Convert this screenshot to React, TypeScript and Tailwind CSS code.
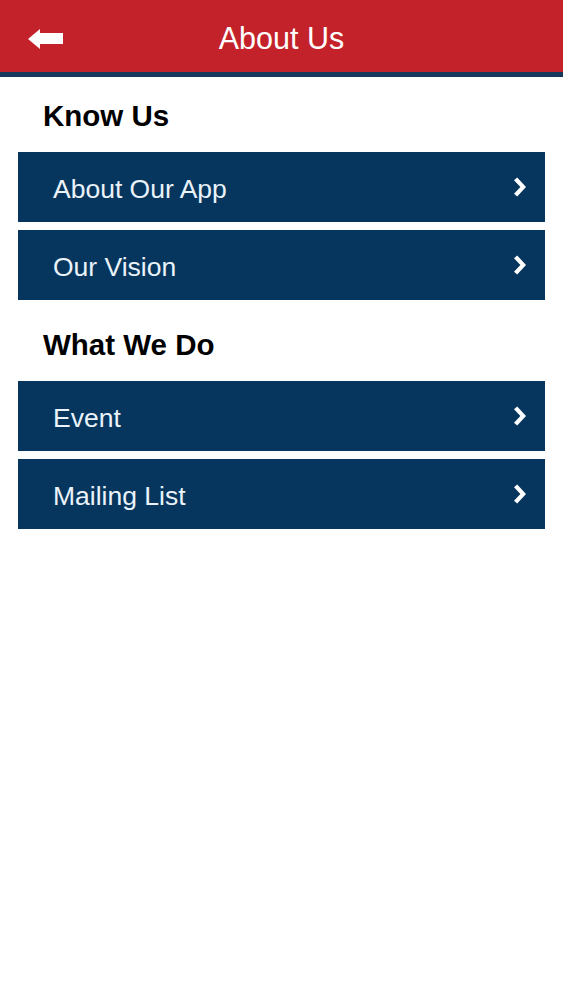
import React from "react";

const font = { fontFamily: '"Liberation Sans", Arial, sans-serif' };

const Chevron = () => (
  <svg width="14" height="20" viewBox="0 0 14 20" fill="white">
    <path d="M1 3.2 L4.2 0.5 L13 10 L4.2 19.5 L1 16.8 L7.4 10 Z" />
  </svg>
);

const BackArrow = () => (
  <svg width="35" height="20" viewBox="0 0 35 20" fill="white">
    <path d="M0 10 L12 0 L12 4 L35 4 L35 15 L12 15 L12 20 Z" />
  </svg>
);

const Row: React.FC<{ label: string }> = ({ label }) => (
  <div className="flex h-[70px] items-center justify-between bg-[#06365d] pl-[35px] pr-[18px]">
    <span className="pt-[6px] text-[26.5px] text-[#eaf2fa]">{label}</span>
    <Chevron />
  </div>
);

const Section: React.FC<{ title: string; items: string[] }> = ({ title, items }) => (
  <div className="flex flex-col">
    <h2 className="pl-[25px] text-[29.5px] font-bold leading-[30px] text-black">{title}</h2>
    <div className="mt-[21px] flex flex-col gap-[8px]">
      {items.map((it) => (
        <Row key={it} label={it} />
      ))}
    </div>
  </div>
);

export default function App() {
  return (
    <div className="min-h-[1000px] w-full bg-white" style={font}>
      <div className="border-b-[5px] border-[#17395b] bg-[#c4222b]">
        <div className="relative flex h-[72px] items-center justify-center pt-[6px]">
          <div className="absolute left-[28px] top-[29px]">
            <BackArrow />
          </div>
          <h1 className="text-[30.5px] text-white">About Us</h1>
        </div>
      </div>
      <div className="flex flex-col gap-[30px] px-[18px] pt-[24px]">
        <Section title="Know Us" items={["About Our App", "Our Vision"]} />
        <Section title="What We Do" items={["Event", "Mailing List"]} />
      </div>
    </div>
  );
}
